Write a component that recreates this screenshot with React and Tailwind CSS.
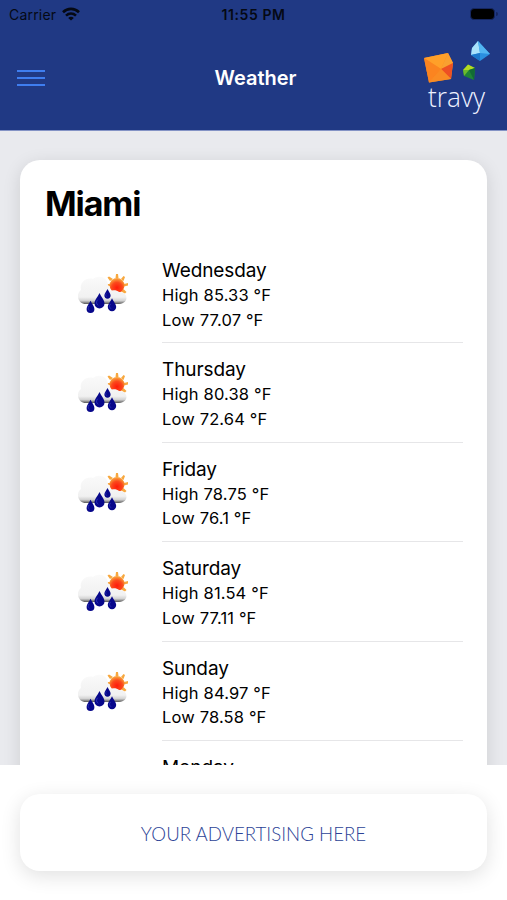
import React from "react";

const days = [
  { day: "Wednesday", high: "85.33", low: "77.07" },
  { day: "Thursday", high: "80.38", low: "72.64" },
  { day: "Friday", high: "78.75", low: "76.1" },
  { day: "Saturday", high: "81.54", low: "77.11" },
  { day: "Sunday", high: "84.97", low: "78.58" },
  { day: "Monday" },
];

const drops = [
  { x: 23.5, y: 31, s: 1.25 },
  { x: 14.5, y: 37, s: 0.98 },
  { x: 36, y: 35, s: 1.05 },
  { x: 31.5, y: 24, s: 0.78 },
];

const WifiIcon = () => (
  <svg width="18" height="14" viewBox="0 0 18 14" fill="none" stroke="#050914" strokeWidth="2.6">
    <path d="M1 5.2C5.6.8 12.4.8 17 5.2" />
    <path d="M4 8.6c3-2.7 7-2.7 10 0" />
    <path d="M9 13.6 6.2 10.9c1.6-1.4 4-1.4 5.6 0Z" fill="#050914" stroke="none" />
  </svg>
);

const Logo = () => (
  <svg width="76" height="84" viewBox="0 0 76 84">
    <path d="M6 22 30 17 35 27 33 43 11 46.500Z" fill="#fb8c22" />
    <path d="M6 22 30 17 23 33Z" fill="#ffa029" />
    <path d="M30 17 35 27 23 33Z" fill="#f9a030" />
    <path d="M6 22 23 33 11 46.500Z" fill="#fb8420" />
    <path d="M35 27 33 43 23 33Z" fill="#ee5023" />
    <path d="M33 43 11 46.500 23 33Z" fill="#f98c24" />
    <path d="M60 5 54 12 53 19 62 25 72 18Z" fill="#2a8fe0" />
    <path d="M60 5 54 12 53 19 62 17Z" fill="#a9e2fb" />
    <path d="M60 5 62 17 72 18Z" fill="#52b5f2" />
    <path d="M53 19 62 17 62 25Z" fill="#1c78cc" />
    <path d="M50 28.500 57 32 56 44 46 40 45 34Z" fill="#1f8436" />
    <path d="M50 28.500 57 32 51 34 45 34Z" fill="#b4d922" />
    <path d="M45 34 51 34 46 40Z" fill="#6cba2c" />
    <path d="M57 32 56 44 51 34Z" fill="#126b34" />
    <text
      x="10"
      y="70.500"
      fill="#eef1ff"
      fontFamily="Open Sans, sans-serif"
      fontWeight="300"
      fontSize="28"
      textLength="57"
      lengthAdjust="spacingAndGlyphs"
    >
      travy
    </text>
  </svg>
);

const WeatherIcon = () => (
  <svg width="54" height="46" viewBox="0 0 54 46">
    <defs>
      <radialGradient id="sun" cx="50%" cy="65%" r="60%">
        <stop offset="0" stopColor="#ff1a0a" />
        <stop offset="0.6" stopColor="#fb4a1c" />
        <stop offset="1" stopColor="#f9a03c" />
      </radialGradient>
      <linearGradient id="cloud" x1="0" y1="0" x2="0" y2="1">
        <stop offset="0" stopColor="#fafafa" />
        <stop offset="0.75" stopColor="#f1f1f1" />
        <stop offset="0.88" stopColor="#d2d2d2" />
        <stop offset="1" stopColor="#555555" />
      </linearGradient>
    </defs>
    <g fill="#f7a83f">
      <path d="m39.500 8 .5-4h2l.5 4Z" />
      <path d="m34 11-2.500-3.500 1.500-1L37 9Z" />
      <path d="m45 9 2.500-3 1.500 1L47.500 11Z" />
      <path d="m48 14 4-1v2.500l-4 1Z" />
      <path d="m47.500 19 3 3-1.500 1.500-4-2Z" />
      <path d="m34 14-4 0v2h4Z" />
    </g>
    <circle cx="41" cy="15.500" r="7.500" fill="url(#sun)" />
    <path
      d="M10 34C1 34 0 23 5 20 3 12 11 7 17 9c6-5 15-1 15 6 2 2 2 4 1 6 4-1 8-1 10 1 9 0 11 11 0 12Z"
      fill="url(#cloud)"
    />
    {drops.map((drop, i) => (
      <g key={i} transform={`translate(${drop.x} ${drop.y}) scale(${drop.s})`}>
        <path d="M0-6.500C1.500-3 4-1 4 2a4 4 0 0 1-8 0C-4-1-1.500-3 0-6.500Z" fill="#07078a" />
        <path d="M-1.500-1c-1.500 2-.8 3.500.5 4.500" stroke="#3038bd" strokeWidth="0.8" fill="none" />
      </g>
    ))}
  </svg>
);

const Header = () => (
  <header className="h-[131px] shrink-0 border-b border-[#8493c5] bg-[#203984]">
    <div className="grid h-7 grid-cols-3 items-center px-[9px] text-[#050914]">
      <div className="flex items-center gap-1.5 text-[14px] tracking-[0.2px]">
        <span>Carrier</span>
        <WifiIcon />
      </div>
      <div className="text-center text-[14px] font-semibold tracking-[0.6px]">11:55 PM</div>
      <div className="flex items-center justify-end">
        <div className="h-3 w-[25px] rounded-[4px] border border-[#152660] bg-black" />
        <div className="ml-px h-1 w-0.5 rounded-r bg-[#152660]" />
      </div>
    </div>
    <div className="grid h-[100px] grid-cols-3 items-center pr-[13px] pl-[17px]">
      <button className="flex w-7 flex-col gap-[5px]" aria-label="Menu">
        <span className="h-[2px] w-full bg-[#3f7ef0]" />
        <span className="h-[2px] w-full bg-[#3f7ef0]" />
        <span className="h-[2px] w-full bg-[#3f7ef0]" />
      </button>
      <h1 className="text-center text-[20px] font-semibold text-white">Weather</h1>
      <div className="flex justify-end">
        <Logo />
      </div>
    </div>
  </header>
);

const App = () => {
  return (
    <div className="flex h-[900px] w-full flex-col overflow-hidden bg-white font-[Inter,sans-serif] text-black">
      <Header />
      <main className="h-[634px] shrink-0 overflow-hidden bg-[#e9eaee] px-5 pt-[29px]">
        <div className="h-[760px] rounded-[20px] bg-white pr-6 pl-[25px] shadow-[0_4px_18px_rgba(0,0,0,0.12)]">
          <h2 className="pt-[22px] text-[34px] leading-[44px] font-bold tracking-[-1.1px]">Miami</h2>
          <ul className="pt-[18px]">
            {days.map((item) => (
              <li key={item.day} className="flex h-[99.4px]">
                <div className="w-[117px] shrink-0 pt-[26px] pl-[31px]">
                  <WeatherIcon />
                </div>
                <div className="flex-1 border-b border-[#e6e6e8] pt-[14px]">
                  <h3 className="text-[19px] leading-[25px] tracking-[-0.1px]">{item.day}</h3>
                  {item.high && (
                    <>
                      <p className="text-[16.5px] leading-[24.5px] tracking-[0.15px]">High {item.high} °F</p>
                      <p className="text-[16.5px] leading-[24.5px] tracking-[0.15px]">Low {item.low} °F</p>
                    </>
                  )}
                </div>
              </li>
            ))}
          </ul>
        </div>
      </main>
      <footer className="flex-1 px-5 pt-[29px]">
        <div className="flex h-[77px] items-center justify-center rounded-[20px] bg-white pt-1 shadow-[0_5px_20px_rgba(0,0,0,0.12)]">
          <p className="font-[Lato,sans-serif] text-[18.7px] font-light text-[#2c4396]">YOUR ADVERTISING HERE</p>
        </div>
      </footer>
    </div>
  );
};

export default App;
